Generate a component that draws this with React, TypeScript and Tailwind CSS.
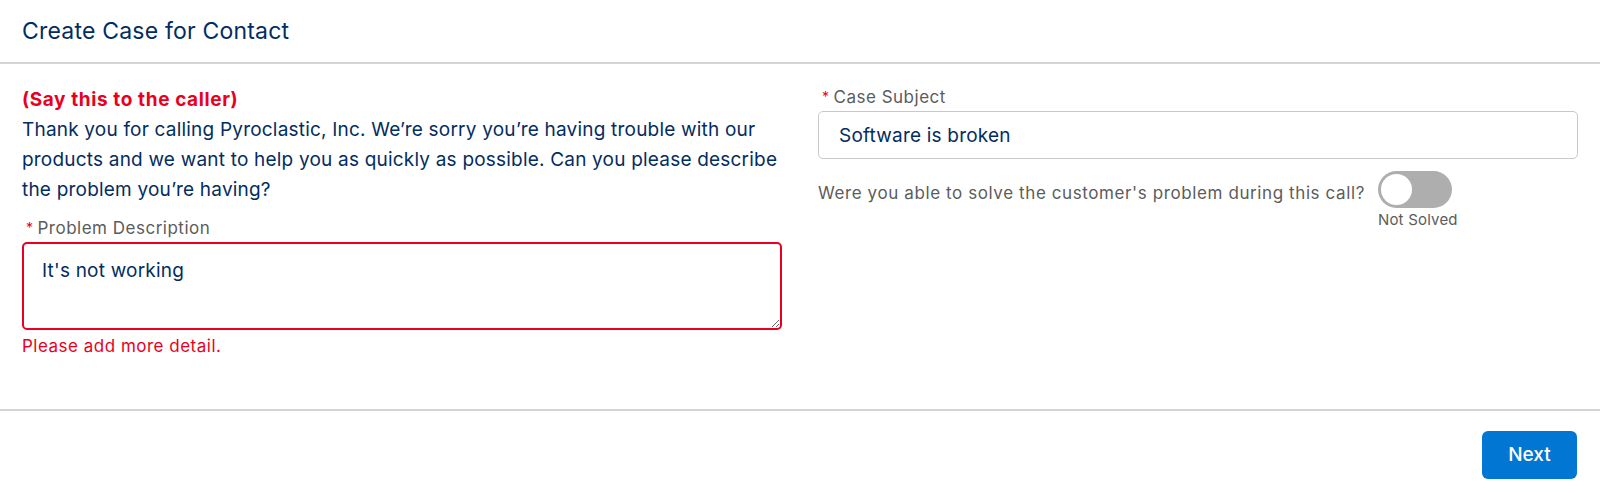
export default function App() {
  return (
    <div className="w-[1600px] h-[493px] bg-white font-['Inter',sans-serif] text-[#032d60]">
      <div className="h-[64px] flex items-center px-[22px] border-b-2 border-[#d4d4d4]">
        <h1 className="text-[23px] tracking-[0.2px] text-[#032d60]">Create Case for Contact</h1>
      </div>

      <div className="h-[347px] grid grid-cols-2 gap-[36px] px-[22px] pt-[21px] border-b-2 border-[#d4d4d4]">
        <div>
          <p className="text-[19px] leading-[30px] font-bold tracking-[0.6px] text-[#ea001e]">(Say this to the caller)</p>
          <p className="text-[19px] leading-[30px] tracking-[0.2px] text-[#032d60]">
            Thank you for calling Pyroclastic, Inc. We’re sorry you’re having trouble with our products and we want to
            help you as quickly as possible. Can you please describe the problem you’re having?
          </p>
          <label className="mt-[12px] flex items-center text-[17px] leading-[22px] tracking-[0.5px] text-[#5c5c5c]">
            <span className="text-[#ea001e] text-[14px] mr-[4px] ml-[4px]">*</span>
            Problem Description
          </label>
          <textarea
            defaultValue="It's not working"
            className="mt-[3px] block w-full h-[88px] rounded-[5px] border-2 border-[#ea001e] px-[18px] pt-[16px] text-[19px] leading-[22px] tracking-[0.2px] text-[#032d60] outline-none"
          />
          <p className="mt-[5px] text-[17px] leading-[22px] tracking-[0.5px] text-[#ea001e]">Please add more detail.</p>
        </div>

        <div>
          <label className="mt-[1px] flex items-center text-[17px] leading-[22px] tracking-[0.5px] text-[#5c5c5c]">
            <span className="text-[#ea001e] text-[14px] mr-[4px] ml-[4px]">*</span>
            Case Subject
          </label>
          <input
            defaultValue="Software is broken"
            className="mt-[3px] block w-full h-[48px] rounded-[5px] border border-[#c9c9c9] px-[20px] text-[19px] tracking-[0.2px] text-[#032d60] outline-none"
          />
          <div className="mt-[12px] flex items-start gap-[13px]">
            <span className="mt-[11px] text-[17px] leading-[22px] tracking-[0.6px] text-[#5c5c5c]">
              Were you able to solve the customer's problem during this call?
            </span>
            <div className="flex flex-col items-start">
              <div className="w-[74px] h-[37px] rounded-full bg-[#aeaeae] p-[3px] flex items-center">
                <div className="w-[31px] h-[31px] rounded-full bg-white" />
              </div>
              <span className="mt-[3px] text-[15px] leading-[18px] tracking-[0.2px] text-[#5c5c5c]">Not Solved</span>
            </div>
          </div>
        </div>
      </div>

      <div className="flex justify-end px-[23px] pt-[20px]">
        <button className="w-[95px] h-[48px] rounded-[6px] bg-[#0176d3] text-white text-[19px] font-medium">
          Next
        </button>
      </div>
    </div>
  )
}
